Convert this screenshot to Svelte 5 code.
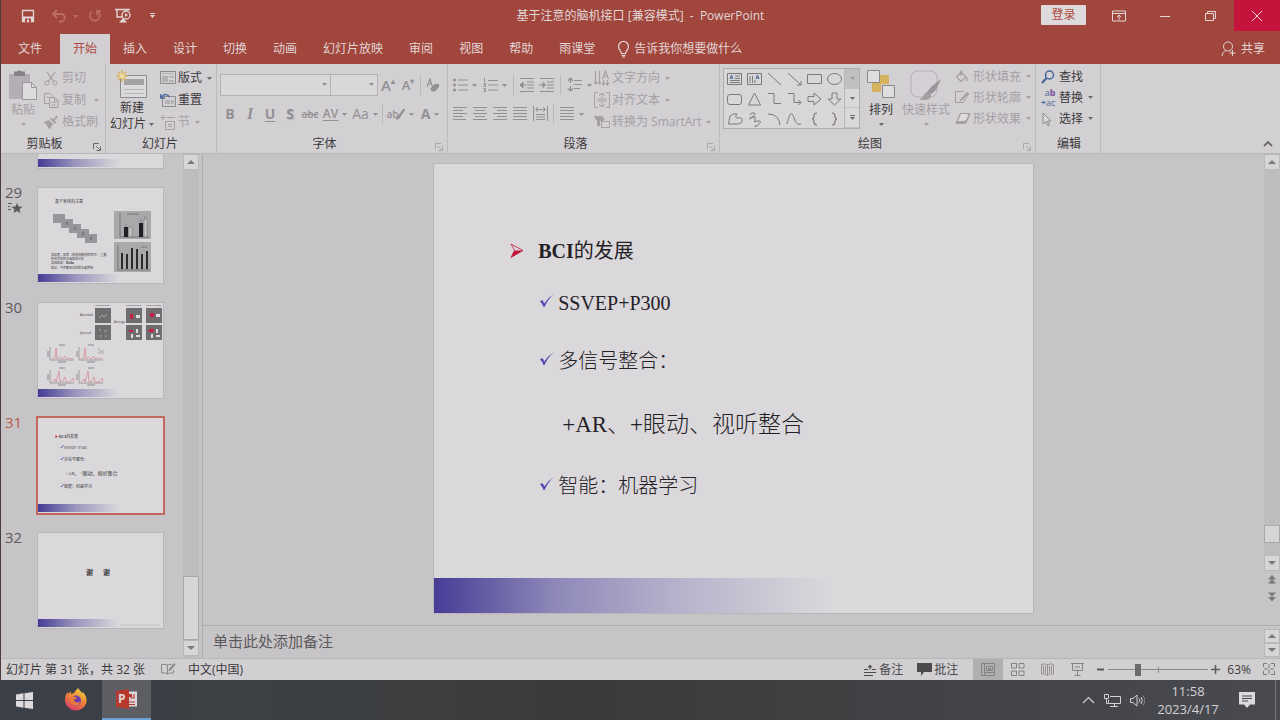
<script>
  const dark = '#5d5a5d';

  // Each glyph: [width, height, markup]
  const icons = {
    save: [14, 14, '<path d="M1.500 1.500h11v11h-11z" fill="none" stroke="currentColor" stroke-width="1.300"/><path d="M1 7.500h12V13H1z" fill="currentColor"/><path d="M4 9.500h6V13H4z" fill="#a0463c"/><path d="M6 10.500h2V13H6z" fill="currentColor"/>'],
    undo: [16, 14, '<path d="M2 5h8a3.600 3.600 0 0 1 0 7.500H8M6 1 2 5l4 4" fill="none" stroke="currentColor" stroke-width="1.800"/>'],
    redo: [14, 14, '<path d="M9.500 2.500A5 5 0 1 1 4 2.600M9 6V2h4" fill="none" stroke="currentColor" stroke-width="1.700"/>'],
    show: [18, 16, '<path d="M0 1.500h15M2 2v7h5" fill="none" stroke="currentColor" stroke-width="1.400"/><circle cx="11" cy="7" r="4" fill="none" stroke="currentColor" stroke-width="1.300"/><path d="M10 5v4l3-2zM8 10l4 4.500H4z" fill="currentColor"/>'],
    customize: [7, 6, '<path d="M1 .500h5" stroke="currentColor"/><path d="M1 2h5L3.500 5z" fill="currentColor"/>'],
    caret: [5, 3, '<path d="M0 0h5L2.500 3z" fill="currentColor"/>'],
    ribbonOpts: [14, 12, '<path d="M.500 1h13v10H.500zM.500 3.500h13M7 10V5M4.800 7 7 5l2.200 2" fill="none" stroke="currentColor"/>'],
    min: [10, 10, '<path d="M0 5.500h10" stroke="currentColor"/>'],
    restore: [12, 12, '<path d="M.500 3.500h8v7h-8zM2.500 3V1.500h8v7H9" fill="none" stroke="currentColor"/>'],
    close: [12, 12, '<path d="m1 1 10 10M11 1 1 11" stroke="currentColor"/>'],
    bulb: [13, 17, '<path d="M4.500 12.500c0-2.500-3-3.500-3-7a5 5 0 0 1 10 0c0 3.500-3 4.500-3 7zM4.500 14.500h4M5 16h3" fill="none" stroke="currentColor" stroke-width="1.200"/>'],
    person: [16, 16, '<circle cx="7" cy="5.500" r="4.500" fill="none" stroke="currentColor"/><path d="M1 15c.500-3 2-5 4-5.500M9 9.500l1 1M11.500 9v6M8.500 12h6" fill="none" stroke="currentColor"/>'],
    paste: [28, 30, '<path d="M0 4h21v25H0z" fill="#b3aeb3"/><path d="M5 1.500h3q2-2 5 0h3V6H5z" fill="#858285"/><path d="M13.500 12.500h9l5 5v12h-14z" fill="#dedbde" stroke="#9b989b"/><path d="M22.500 12.500v5h5" fill="none" stroke="#9b989b"/>'],
    cut: [15, 15, '<path d="m3 1 7 10M11 1 4 11" stroke="currentColor" stroke-width="1.300"/><circle cx="3" cy="12" r="2.200" fill="none" stroke="currentColor"/><circle cx="11" cy="12" r="2.200" fill="none" stroke="currentColor"/>'],
    copy: [15, 15, '<path d="M5 10.500H.500v-10H6l2 2V4M5.500 4.500H11l3 3v7H5.500zM10.500 5v3h3M3 4h2M7.500 9.500h4M7.500 12h4" fill="none" stroke="currentColor"/>'],
    brush: [15, 14, '<path d="m0 7 5-2 4 4-3 5c-1 0-2-1-2-2zM6 4l5 5 1.500-1.500-2-2L14 2l-1.500-1.500L9 4.500l-1.500-2z" fill="currentColor"/>'],
    newSlide: [32, 28, '<path d="M4.500 5.500h26v22h-26z" fill="#dcdadd" stroke="#8f8c8f"/><path d="M8 9h20v6H8z" fill="#a5a2a6"/><path d="M8 19.500h20M8 23.500h20" stroke="#b9b6ba"/><path d="M6 0v12M0 6h12M2 2l8 8M10 2l-8 8" stroke="#d8b35a" stroke-width="1.500"/><circle cx="6" cy="6" r="2.500" fill="#eadba0"/>'],
    layout: [16, 14, '<path d="M.500.500h15v12H.500z" fill="none" stroke="#8f8c8f"/><path d="M2 2.500h12" stroke="#b5b2b6"/><path d="M2 5h6v6H2zM9 5h5v2H9zM9 9h5v2H9z" fill="#b5b2b6"/>'],
    reset: [16, 15, '<path d="M2.500 3.500h13v10h-13z" fill="none" stroke="#8f8c8f"/><path d="M5 7h5v4H5zM11 7h3v4h-3z" fill="#b5b2b6"/><path d="M1 4.500C3 1 7 0 9.500 4M.500 1v4H5" fill="none" stroke="#4a6f9f" stroke-width="1.500"/>'],
    section: [16, 15, '<path d="M3 0v5M.500 2.500h5M7 2.500h8M5.500 6.500h9v8h-9zM8 9.500h4M8 11.500h4" fill="none" stroke="currentColor"/>'],
    launcher: [8, 8, '<path d="M.500 6V.500H6M3 3l4 4M7.500 3.500v4h-4" fill="none" stroke="currentColor"/>'],
    eraser: [14, 14, '<path d="m1 9 3-8 2.500 8M2 6h4" fill="none" stroke="currentColor" stroke-width="1.200"/><path d="m4 11 5-5h4v3l-4 4.500H6z" fill="currentColor"/>'],
    slash: [9, 14, '<path d="m8 1-7 9-1 3 3-1 6-9z" fill="currentColor"/>'],
    bullets: [15, 14, '<path d="M5 2h10M5 7h10M5 12h10" stroke="currentColor"/><circle cx="1.500" cy="2" r="1.500" fill="currentColor"/><circle cx="1.500" cy="7" r="1.500" fill="currentColor"/><circle cx="1.500" cy="12" r="1.500" fill="currentColor"/>'],
    numbers: [15, 14, '<path d="M5 2.500h10M5 7h10M5 12h10M1.500 0v4M.500 5.500h2v1.500H1v1.500h2M.500 10.500h2v3h-2M1 12h1.500" fill="none" stroke="currentColor"/>'],
    dedent: [16, 14, '<path d="M1 .500h14M8 4h7M8 7h7M8 10h7M1 13.500h14M7 7H1.500M4 4 1 7l3 3" fill="none" stroke="currentColor"/><path d="M4.500 3.500 1 7l3.500 3.500z" fill="currentColor"/>'],
    indent: [16, 14, '<path d="M1 .500h14M8 4h7M8 7h7M8 10h7M1 13.500h14M0 7h5" fill="none" stroke="currentColor"/><path d="M3.500 3.500 7 7l-3.500 3.500z" fill="currentColor"/>'],
    spacing: [16, 16, '<path d="M3.500 1v5M3.500 9v5M7 3.500h8M7 7.500h8M7 11.500h6M1 4l2.500-3L6 4M1 11.500 3.500 14 6 11.500" fill="none" stroke="currentColor" stroke-width="1.200"/>'],
    left: [15, 16, '<path d="M0 1.500h14M0 4.500h10M0 7.500h14M0 10.500h10M0 13.500h13" stroke="currentColor"/>'],
    center: [15, 16, '<path d="M0 1.500h14M2 4.500h10M0 7.500h14M2 10.500h10M0 13.500h14" stroke="currentColor"/>'],
    right: [15, 16, '<path d="M0 1.500h14M4 4.500h10M0 7.500h14M4 10.500h10M0 13.500h14" stroke="currentColor"/>'],
    justify: [15, 16, '<path d="M0 1.500h14M0 4.500h14M0 7.500h14M0 10.500h14M0 13.500h14" stroke="currentColor"/>'],
    distribute: [15, 16, '<path d="M.500 0v15M14.500 0v15M2.500 3.500h10M5 1 2.500 3.500 5 6M10 1l2.500 2.500L10 6M3 8.500h9M3 11h9M3 13.500h9" fill="none" stroke="currentColor"/>'],
    textDir: [17, 17, '<path d="M1.500 1v12M5.500 1v12M9.500 10v4M13.500 10v4M0 12l1.500 2L3 12M4 12l1.500 2L7 12M8 13l1.500 2 1.500-2M12 13l1.500 2 1.500-2M8.500 9l3-8 3 8M9.500 6h4" fill="none" stroke="currentColor" stroke-width="1.200"/>'],
    alignText: [17, 16, '<path d="M4 .500H.500v15H4M12 .500h3.500v15H12M8 1v5M8 10v5M5 3.500 8 1l3 2.500M5 12.500 8 15l3-2.500M3.500 7h9M3.500 9h9" fill="none" stroke="currentColor"/>'],
    smart: [17, 14, '<path d="M0 1h8l3 3-2 2H6v5H3V5H2z" fill="currentColor"/><path d="M7.500 6.500h8v6h-8z" fill="#d6d3d6" stroke="currentColor"/>'],
    arrange: [28, 28, '<path d="M12 5h10v9H12zM5 13h9v9H5z" fill="#d5b25e"/><path d="M.500.500h12v12H.500zM15.500 15.500h12v12h-12z" fill="#dfdde0" stroke="#8b888b"/>'],
    quick: [32, 32, '<rect x="1" y="1" width="26" height="26" rx="7" fill="#d6cfd6" stroke="#b4aeb4"/><path d="m31 9-5 11-6 5-3-3 5-6z" fill="#999599"/><path d="M18 22c-3 0-4 2-5 5-1 1-2 2-4 3h6c5 0 6-3 6-5z" fill="#a39fa3"/>'],
    fill: [14, 14, '<path d="m6 2 5 5-5 4.500L1.500 7zM6 6V1h2M12 7v4" fill="none" stroke="currentColor" stroke-width="1.200"/>'],
    outline: [15, 13, '<path d="M9 .500H.500v11h8L14 2" fill="none" stroke="currentColor"/><path d="m12 1 2 1.500-7 7-2.500 1L5.500 8z" fill="currentColor"/>'],
    effect: [16, 14, '<path d="M5 1h9q2 0 1 2l-3 7q-1 2-3 2H2q-2 0-1-2z" fill="currentColor"/><path d="M6 2h6q2 0 1 2l-2 4q-1 1-2 1H3z" fill="#dcdadd"/>'],
    find: [14, 14, '<circle cx="8.500" cy="5" r="4" fill="none" stroke="#48699a" stroke-width="1.500"/><path d="M5.500 8 1 13" stroke="#48699a" stroke-width="2.200"/>'],
    arrow: [5, 5, '<path d="M0 2.500h4M2 .500l2 2-2 2" fill="none" stroke="currentColor"/>'],
    select: [12, 14, '<path d="m2 1 8 8H6.500l2 4-1.500.700L5 9.500 2 12z" fill="#dcdadd" stroke="#8b888b"/>'],
    chevUp: [10, 6, '<path d="m1 5 4-4 4 4" fill="none" stroke="currentColor" stroke-width="1.800"/>'],
    star: [16, 12, '<path d="m10 1 1.500 3.500 4 .200-3 2.500 1 4L10 9l-3.500 2 1-3.800-3-2.500 4-.200z" fill="currentColor"/><path d="M1 1.500h4M1 4.500h2M1 7.500h3" stroke="currentColor"/>'],
    spell: [15, 13, '<path d="M6.500 2v9Q4 9 .500 10V1.500q4-.500 6 .500 2-1 4-.500M6.500 11q2-1.500 6-1V7" fill="none" stroke="currentColor"/><path d="m13 0 1.500 1.500-5 6-2 .500.500-2z" fill="currentColor"/>'],
    notes: [13, 12, '<path d="M0 5.500h4M8 5.500h4M0 8.500h12M0 11.500h9M6 2v4" stroke="currentColor"/><path d="M3.500 3.500 6 .500l2.500 3z" fill="currentColor"/>'],
    comment: [15, 13, '<path d="M0 0h15v9H7l-3 4V9H0z" fill="currentColor"/>'],
    normal: [14, 13, '<path d="M.500.500h13v12H.500zM3.500 1v11M5.500 3.500h6v4h-6zM4 9.500h9" fill="none" stroke="currentColor"/><path d="M7 5h3v2H7z" fill="currentColor"/>'],
    sorter: [14, 13, '<path d="M.500.500h5v4.500h-5zM8 .500h5v4.500H8zM.500 8h5v4.500h-5zM8 8h5v4.500H8z" fill="none" stroke="currentColor"/>'],
    reading: [14, 13, '<path d="M6.500 1.500v11M.500 1.500Q4 0 6.500 2 9 0 12.500 1.500v9.500Q9 10.500 6.500 12 4 10.500.500 11zM2.500 3v7M4.500 3v7M8.500 3v7M10.500 3v7" fill="none" stroke="currentColor" stroke-width=".8"/>'],
    present: [14, 13, '<path d="M0 .500h13M1.500 1v6.500h10V1M6.500 8v4M3.500 12.500h6M4 4h5" fill="none" stroke="currentColor"/>'],
    fit: [13, 13, '<path d="M.500 4V.500H4M8 .500h3.500V4M11.500 8v3.500H8M4 11.500H.500V8" fill="none" stroke="currentColor"/><path d="M6 1v4M6 7v4M1 6h4M7 6h4" stroke="currentColor"/>'],
    dblUp: [8, 10, '<path d="M4 0 8 4.500H0zM4 4l4 4.500H0z" fill="currentColor"/>'],
    dblDown: [8, 10, '<path d="M4 9.500 0 5h8zM4 5 0 .500h8z" fill="currentColor"/>'],
    up: [8, 4, '<path d="m4 0 4 4H0z" fill="currentColor"/>'],
    down: [8, 4, '<path d="M0 0h8L4 4z" fill="currentColor"/>'],
    win: [17, 17, '<path d="M0 2.500 7.500 1.300V8H0zM8.500 1.200 17 0v8H8.500zM0 9h7.500v6.700L0 14.500zM8.500 9H17v8l-8.500-1.200z" fill="#dcdadd"/>'],
    firefox: [24, 24, '<defs><linearGradient id="ff" x1=".8" y1="0" x2=".3" y2="1"><stop offset="0" stop-color="#f0d545"/><stop offset=".45" stop-color="#ee8a36"/><stop offset="1" stop-color="#d93a67"/></linearGradient></defs><path d="M14 0c1 2 3 3 4 5l1-1c3 3 4 7 3.500 10.500A11 11 0 0 1 1 13C.800 9 2 6 3.500 4L4 6l3-2.500V6l3-1c1-2 2.500-3 4-5z" fill="url(#ff)"/><circle cx="12" cy="12.500" r="5" fill="#6b3fb0"/><path d="M6 9c2-1 4-1 5 0l2 .500c-.500 1.500-2 1.500-3 2 0 3 4 4 6.500 2-1 4-6 5-9 2-2-2-2.500-4.500-1.500-6.500z" fill="#ed7b38"/>'],
    ppt: [22, 20, '<path d="M12 2.500h9v15h-9z" fill="#dcd4d6"/><path d="M13 13h6M13 15.500h6M18 5v4h-4" fill="none" stroke="#b03a30" stroke-width="1.200"/><path d="M13 5h3v3h-3z" fill="#b03a30"/><path d="m0 2 13-2v20L0 18z" fill="#b5392d"/>'],
    tray: [13, 8, '<path d="m1 7 5.500-5.500L12 7" fill="none" stroke="currentColor" stroke-width="1.200"/>'],
    net: [17, 13, '<path d="M6 2.500h10.500v7H4.500V6M10.500 10v2M6 12.500h8M.500.500h4v4h-4zM2.500 5v4.500H4" fill="none" stroke="currentColor"/>'],
    vol: [15, 13, '<path d="M.500 4.500h2.500L7 1v11L3 8.500H.500zM9 4.500q1.500 2 0 4M11 3q2.500 3.500 0 7" fill="none" stroke="currentColor"/><path d="M13 1.500q3.500 5 0 10" fill="none" stroke="#85858a"/>'],
    msg: [16, 16, '<path d="M0 0h16v12.500h-5L8 16l-3-3.500H0z" fill="#dcdadd"/><path d="M3 4h10M3 6.500h10M3 9h6" stroke="#45464b"/>']
  };

  const shapes = [
    '<path d="M1.500 2.500h14v11h-14zM9 5h5M9 7.500h5M4 9.500h10M4 11.500h10"/><path d="m4 8 1.500-4L7 8M4.500 7h2" stroke="#48699a"/>',
    '<path d="M1.500 2.500h14v11h-14zM4 5v7M6.500 5v7M9 9v3"/><path d="m10 8 1.500-4L13 8M10.500 7h2" stroke="#48699a"/>',
    '<path d="m2 2 13 12"/>', '<path d="m2 2 13 12M15 10v4h-4"/>',
    '<path d="M1.500 3.500h14v9h-14z"/>', '<ellipse cx="8.500" cy="8" rx="7" ry="5.500"/>',
    '<rect x="1.500" y="3.500" width="14" height="10" rx="2.500"/>', '<path d="M8.500 2 14.500 14h-12z"/>',
    '<path d="M2 2.500h6v10h7"/>', '<path d="M2 2.500h6v9h7M12.500 9l2.500 2.500-2.500 2.500"/>',
    '<path d="M2 5.500h6V2l7 6-7 6v-3.500H2z"/>', '<path d="M6 2h5v6h4l-6.500 6L2 8h4z"/>',
    '<path d="M4 5q3-3 7-2-3 4 1 4 5-1 4 3-1 3-4 3H2.500z"/>', '<path d="M4 4q1-3 4-2t-2 4-1 1 4-1 0 3-1 2 4-1 0 4-2 0"/>',
    '<path d="M2 3q11 0 12 11"/>', '<path d="M1 13C4 0 6 1 8 7s4 7 7 6"/>',
    '<path d="M11 2Q8 2 8 5t-2 3q2 0 2 3t3 3" stroke-width="1.200"/>', '<path d="M6 2q3 0 3 3t2 3q-2 0-2 3t-3 3" stroke-width="1.200"/>'
  ];

  const tabs = ['文件', '开始', '插入', '设计', '切换', '动画', '幻灯片放映', '审阅', '视图', '帮助', '雨课堂'];
  const thumbs = [28, 29, 30, 31, 32];
  let current = $state(31);
  let zoom = $state(28);
</script>

{#snippet ico(name)}
  <svg class="ico" width={icons[name][0]} height={icons[name][1]} viewBox="0 0 {icons[name][0]} {icons[name][1]}" aria-hidden="true">{@html icons[name][2]}</svg>
{/snippet}

{#snippet btn(name, label, caret = false)}
  <button class="tool" class:wide={caret} aria-label={label}>{@render ico(name)}{#if caret}{@render ico('caret')}{/if}</button>
{/snippet}

{#snippet line(name, text, caret = true, on = false)}
  <button class="line" class:on>
    <span class="slot">{@render ico(name)}</span><span>{text}</span>{#if caret}<span class="drop">{@render ico('caret')}</span>{/if}
  </button>
{/snippet}

{#snippet caption(text, launch = true, on = false)}
  <div class="caption">
    <span>{text}</span>
    {#if launch}<button class="launch" class:on aria-label="{text}设置">{@render ico('launcher')}</button>{/if}
  </div>
{/snippet}

{#snippet bars(x, y, heights)}
  {#each heights as h, i}
    <rect x={x + i * 5} y={y - h} width="2" height={h} fill="#2b2a2d" />
  {/each}
{/snippet}

<div class="screen">
  <div class="app">
    <header class="titlebar">
      <div class="quickbar">
        <button aria-label="保存">{@render ico('save')}</button>
        <button class="dim undo" aria-label="撤消">{@render ico('undo')}{@render ico('caret')}</button>
        <button class="dim redo" aria-label="恢复">{@render ico('redo')}</button>
        <button aria-label="从头开始">{@render ico('show')}</button>
        <button aria-label="自定义">{@render ico('customize')}</button>
      </div>
      <h1>基于注意的脑机接口 [兼容模式]&nbsp; - &nbsp;PowerPoint</h1>
      <div class="winbtns">
        <button class="login">登录</button>
        <button aria-label="功能区显示选项">{@render ico('ribbonOpts')}</button>
        <button aria-label="最小化">{@render ico('min')}</button>
        <button aria-label="还原">{@render ico('restore')}</button>
        <button class="close" aria-label="关闭">{@render ico('close')}</button>
      </div>
    </header>

    <nav class="tabs">
      {#each tabs as tab}
        <button class="tab" class:file={tab === '文件'} class:active={tab === '开始'}>{tab}</button>
      {/each}
      <button class="tell">{@render ico('bulb')}<span>告诉我你想要做什么</span></button>
      <button class="share">{@render ico('person')}<span>共享</span></button>
    </nav>

    <section class="ribbon">
      <div class="group clip">
        <div class="body">
          <button class="big">{@render ico('paste')}<span>粘贴</span>{@render ico('caret')}</button>
          <div class="stack">
            {@render line('cut', '剪切', false)}
            {@render line('copy', '复制')}
            {@render line('brush', '格式刷', false)}
          </div>
        </div>
        {@render caption('剪贴板', true, true)}
      </div>

      <div class="group slides">
        <div class="body">
          <button class="big on new">{@render ico('newSlide')}<span>新建</span><span class="two">幻灯片{@render ico('caret')}</span></button>
          <div class="stack">
            {@render line('layout', '版式', true, true)}
            {@render line('reset', '重置', false, true)}
            {@render line('section', '节')}
          </div>
        </div>
        {@render caption('幻灯片', false)}
      </div>

      <div class="group font">
        <div class="body rows">
          <div class="row">
            <div class="combo name"><select aria-label="字体"><option></option></select>{@render ico('caret')}</div>
            <div class="combo size"><select aria-label="字号"><option></option></select>{@render ico('caret')}</div>
            <button class="tool grow" aria-label="增大字号">A<sup>▴</sup></button>
            <button class="tool grow small" aria-label="减小字号">A<sup>▾</sup></button>
            <i class="sep"></i>
            {@render btn('eraser', '清除格式')}
          </div>
          <div class="row">
            <button class="tool"><b>B</b></button>
            <button class="tool"><em>I</em></button>
            <button class="tool"><b><u>U</u></b></button>
            <button class="tool"><b class="shadow">S</b></button>
            <button class="tool abc"><s>abc</s></button>
            <button class="tool wide av"><u>AV</u>{@render ico('caret')}</button>
            <button class="tool wide aa">Aa{@render ico('caret')}</button>
            <i class="sep"></i>
            <button class="tool wide hl"><span class="pen">ab{@render ico('slash')}</span>{@render ico('caret')}</button>
            <button class="tool wide"><b>A</b>{@render ico('caret')}</button>
          </div>
        </div>
        {@render caption('字体')}
      </div>

      <div class="group para">
        <div class="body">
          <div class="rows">
            <div class="row">
              {@render btn('bullets', '项目符号', true)}
              {@render btn('numbers', '编号', true)}
              <i class="sep"></i>
              {@render btn('dedent', '减少缩进')}
              {@render btn('indent', '增加缩进')}
              <i class="sep"></i>
              {@render btn('spacing', '行距', true)}
            </div>
            <div class="row">
              {@render btn('left', '左对齐')}
              {@render btn('center', '居中')}
              {@render btn('right', '右对齐')}
              {@render btn('justify', '两端对齐')}
              {@render btn('distribute', '分散对齐')}
              <i class="sep"></i>
              {@render btn('justify', '分栏', true)}
            </div>
          </div>
          <div class="stack">
            {@render line('textDir', '文字方向')}
            {@render line('alignText', '对齐文本')}
            {@render line('smart', '转换为 SmartArt')}
          </div>
        </div>
        {@render caption('段落')}
      </div>

      <div class="group draw">
        <div class="body">
          <div class="gallery">
            <div class="cells">
              {#each shapes as s, i}
                <button aria-label="形状 {i + 1}"><svg width="17" height="16" viewBox="0 0 17 16" fill="none" stroke="#7d7a7d">{@html s}</svg></button>
              {/each}
            </div>
            <div class="gscroll">
              <button class="off" aria-label="上移">{@render ico('caret')}</button>
              <button aria-label="下移">{@render ico('caret')}</button>
              <button aria-label="更多">{@render ico('customize')}</button>
            </div>
          </div>
          <button class="big on arr">{@render ico('arrange')}<span>排列</span>{@render ico('caret')}</button>
          <button class="big quick">{@render ico('quick')}<span>快速样式</span>{@render ico('caret')}</button>
          <div class="stack tight">
            {@render line('fill', '形状填充')}
            {@render line('outline', '形状轮廓')}
            {@render line('effect', '形状效果')}
          </div>
        </div>
        {@render caption('绘图')}
      </div>

      <div class="group edit">
        <div class="body">
          <div class="stack tight">
            {@render line('find', '查找', false, true)}
            <button class="line on">
              <span class="slot swap"><span>a<b>b</b></span><span class="to">{@render ico('arrow')}ac</span></span><span>替换</span><span class="drop">{@render ico('caret')}</span>
            </button>
            {@render line('select', '选择', true, true)}
          </div>
        </div>
        {@render caption('编辑', false)}
      </div>
      <button class="collapse" aria-label="折叠功能区">{@render ico('chevUp')}</button>
    </section>

    <main>
      <aside>
        <ol class="thumbs">
          {#each thumbs as n}
            <li class:sel={n === current}>
              <div class="num">{#if n > thumbs[0]}<span>{n}</span>{/if}{#if n === 29}{@render ico('star')}{/if}</div>
              <button class="thumb" aria-label="幻灯片 {n}" onclick={() => (current = n)}>
                <svg viewBox="0 0 125 95" width="125" height="95">
                  <rect y="86" width="125" height="8" fill="url(#band)" />
                  {#if n === 29}
                    <text x="17" y="15" font-size="4">基于客体的注意</text>
                    {#each [0, 1, 2, 3, 4] as k}
                      <rect x={15 + k * 8} y={26 + k * 5} width="12" height="9" fill="#98969a" />
                      {#if k}<text x={20 + k * 8} y={32 + k * 5} font-size="4">E</text>{/if}
                    {/each}
                    <rect x="76" y="23" width="37" height="28" fill="#aaa8ab" />
                    <path d="M82 25v24h29M89 26h12" stroke="#555" fill="none" stroke-width=".6" />
                    <path d="M86 39h4v10h-4zM101 35h4v14h-4z" fill="#1f1e22" />
                    <path d="M91 39h3v10h-3zM106 31h3v18h-3zM88 36v3M103 31v4M107 28v3" fill="#c9c7ca" stroke="#666" stroke-width=".5" />
                    <rect x="76" y="54" width="37" height="30" fill="#aaa8ab" />
                    <path d="M80 57v25h32M103 59h6" stroke="#555" fill="none" stroke-width=".6" />
                    {@render bars(83, 81, [16, 15, 21, 20, 15, 18])}
                    <text x="13" y="68" font-size="3">实验者：探索（视觉和触觉的空间）：重复</text>
                    <text x="13" y="72" font-size="3">听觉对应的注意结果分析</text>
                    <text x="13" y="76" font-size="3">实验结果：<tspan font-weight="bold">N=6a</tspan></text>
                    <text x="13" y="81" font-size="3">结论：不同客体对应的注意影响</text>
                  {:else if n === 30}
                    <path d="M57 5h16v15H57zM57 22h16v15H57zM88 5h16v15H88zM88 22h16v15H88zM108 5h16v15h-16zM108 22h16v15h-16z" fill="#6f6d70" />
                    <path d="m61 15 3-3 2 2 3-3M61 27h2M66 28h3M62 33h2M67 33h2" stroke="#aaa" fill="none" />
                    <path d="M92 11h3v5h-3zM111 12l3-3 3 3-3 3zM91 27h4v2h-4zM111 26h5v3h-5z" fill="#c62042" />
                    <path d="M98 12h4v3h-4zM118 11h4v3h-4zM98 26h2v4h-2zM93 31h2v4h-2zM98 32h4v2h-4zM118 26h2v4h-2zM113 31h2v4h-2zM118 32h4v2h-4z" fill="#dddbde" />
                    <text x="57" y="3" font-size="2">Design scheme1</text>
                    <text x="88" y="3" font-size="2">Design scheme2</text>
                    <text x="108" y="3" font-size="2">Design scheme3</text>
                    <text x="42" y="13" font-size="3">Attended</text><text x="42" y="31" font-size="3">Ignored</text><text x="76" y="20" font-size="3">Average</text>
                    {#each [[12, 44], [41, 44], [12, 67], [41, 67]] as [x, y], k}
                      <g transform="translate({x} {y})">
                        <path d="M0 0v13h24" fill="none" stroke="#77757a" stroke-width=".6" />
                        <path d={k < 2 ? 'M2 12 5 11 6 1 7 12l3-2 2 2 3-3 1 3 3-1 4 1' : 'M2 12l3-3 1 3 3-11 1 11 3-1 2-4 1 5 4 0 3-4 1 4'} fill="none" stroke="#d4656c" stroke-width=".5" />
                        <path d="M-2 4v6M8 15h8M9-2h6" stroke="#77757a" stroke-width=".8" />
                      </g>
                    {/each}
                    <path d="M59 46h3M61 48h5M60 50h6" stroke="#99979b" stroke-width=".7" />
                  {:else if n === 31}
                    <path d="m17 17 3 1.500-3 1.500.700-1.500z" fill="#c4143c" />
                    <text x="21" y="20" font-size="4" class="serif"><tspan font-weight="bold">BCI</tspan>的发展</text>
                    <text x="26" y="31" font-size="4" class="serif">SSVEP+P300</text>
                    <text x="26" y="43" font-size="4" class="serif">多信号整合：</text>
                    <text x="27" y="57" font-size="5" class="serif">+AR、+眼动、视听整合</text>
                    <text x="26" y="70" font-size="4" class="serif">智能：机器学习</text>
                    <path d="m22.500 29 1 1 2-3M22.500 41l1 1 2-3M22.500 68l1 1 2-3" fill="none" stroke="#5548b0" stroke-width=".8" />
                  {:else if n === 32}
                    <text x="48" y="42" font-size="7" font-weight="bold">谢</text><text x="65" y="42" font-size="7" font-weight="bold">谢</text>
                    <path d="M83 92h39" stroke="#bdbabe" stroke-width=".8" stroke-dasharray="3 1" />
                  {/if}
                </svg>
              </button>
            </li>
          {/each}
        </ol>
        <div class="vbar">
          <button aria-label="向上">{@render ico('up')}</button>
          <div class="track"></div>
          <div class="grip long"></div>
          <button aria-label="向下">{@render ico('down')}</button>
        </div>
      </aside>

      <section class="work">
        <div class="canvas">
          <div class="stage">
            <article class="slide">
              <ul>
                <li class="head"><svg width="28" height="16" viewBox="0 0 28 16"><path d="m1 1 12 6.500L1 14.500l3.500-7z" fill="none" stroke="#c4143c" stroke-width=".8" /><path d="M4.500 7.500H13l-12 7z" fill="#c4143c" /></svg><span><b>BCI</b>的发展</span></li>
                {#each ['SSVEP+P300', '多信号整合：', '+AR、+眼动、视听整合', '智能：机器学习'] as t, i}
                  <li class="i{i}">{#if i !== 2}<svg class="tick" width="18" height="16" viewBox="0 0 18 16"><path d="m0 8.500 2-1.500q1.500.500 2.200 3.500Q8 4.500 14 1 8 6 4.500 14H3.500Q2 10 0 8.500z" fill="#5548b0" /></svg>{/if}<span>{t}</span></li>
                {/each}
              </ul>
              <div class="band"></div>
            </article>
          </div>
          <div class="vbar right">
            <button aria-label="上滚">{@render ico('up')}</button>
            <div class="track"></div>
            <div class="grip"></div>
            <div class="track last"></div>
            <button aria-label="下滚">{@render ico('down')}</button>
            <button class="flat" aria-label="上一张">{@render ico('dblUp')}</button>
            <button class="flat" aria-label="下一张">{@render ico('dblDown')}</button>
          </div>
        </div>
        <div class="notes">
          <p>单击此处添加备注</p>
          <div class="mini">
            <button aria-label="备注上滚">{@render ico('up')}</button>
            <button aria-label="备注下滚">{@render ico('down')}</button>
          </div>
        </div>
      </section>
    </main>

    <footer class="status">
      <span>幻灯片 第 31 张，共 32 张</span>
      <button class="spell" aria-label="拼写检查">{@render ico('spell')}</button>
      <span>中文(中国)</span>
      <div class="right-side">
        <button class="txt">{@render ico('notes')}备注</button>
        <button class="txt com">{@render ico('comment')}批注</button>
        <button class="view cur" aria-label="普通视图">{@render ico('normal')}</button>
        <button class="view" aria-label="幻灯片浏览">{@render ico('sorter')}</button>
        <button class="view" aria-label="阅读视图">{@render ico('reading')}</button>
        <button class="view" aria-label="幻灯片放映">{@render ico('present')}</button>
        <button class="pm" aria-label="缩小"><svg width="9" height="9"><path d="M1 4.500h7" stroke={dark} stroke-width="2" /></svg></button>
        <input type="range" min="0" max="100" bind:value={zoom} aria-label="显示比例" />
        <button class="pm" aria-label="放大"><svg width="9" height="9"><path d="M0 4.500h9M4.500 0v9" stroke={dark} stroke-width="1.500" /></svg></button>
        <span class="pct">63%</span>
        <button class="fit" aria-label="适应窗口">{@render ico('fit')}</button>
      </div>
    </footer>
  </div>

  <div class="taskbar">
    <button aria-label="开始菜单">{@render ico('win')}</button>
    <button class="fx" aria-label="Firefox">{@render ico('firefox')}</button>
    <button class="running" aria-label="PowerPoint">{@render ico('ppt')}<span class="p">P</span></button>
    <div class="tray">
      <button aria-label="显示隐藏的图标">{@render ico('tray')}</button>
      <button aria-label="网络">{@render ico('net')}</button>
      <button aria-label="音量">{@render ico('vol')}</button>
      <div class="clock"><span>11:58</span><span>2023/4/17</span></div>
      <button aria-label="通知">{@render ico('msg')}</button>
      <i class="peek"></i>
    </div>
  </div>
</div>

<svg class="defs" width="0" height="0" aria-hidden="true">
  <defs>
    <linearGradient id="band"><stop offset="0" stop-color="#463c96" /><stop offset=".3" stop-color="#9a96bd" /><stop offset=".65" stop-color="#dad8db" /></linearGradient>
  </defs>
</svg>

<style>
  :global(body) { margin: 0; background: #c7c4c7; }
  .screen, .screen * { box-sizing: border-box; }
  .screen {
    height: 100vh; display: flex; flex-direction: column; overflow: hidden;
    font: 12px/18px "Open Sans", "Noto Sans CJK SC", sans-serif; color: #3b393b;
  }
  .defs { position: absolute; }
  button { font: inherit; color: inherit; background: none; border: 0; padding: 0; margin: 0; display: flex; align-items: center; justify-content: center; white-space: nowrap; }
  .ico { display: block; flex: none; }
  .app { flex: 1; min-height: 0; display: flex; flex-direction: column; border-left: 1px solid #4d3c40; }

  .titlebar { flex: none; height: 32px; display: grid; grid-template-columns: 1fr auto 1fr; background: #a0463c; color: #e3d6d7; }
  h1 { font: inherit; margin: 0; line-height: 32px; white-space: nowrap; }
  .quickbar { display: flex; align-items: center; gap: 16px; padding-left: 20px; }
  .quickbar .undo { gap: 6px; margin-right: -6px; }
  .quickbar .redo { margin-right: -3px; }
  .dim { color: #bd6d65; }
  .winbtns { display: flex; justify-content: flex-end; align-items: center; }
  .winbtns button { width: 46px; height: 31px; align-self: flex-start; }
  .winbtns .login { width: 45px; height: 20px; background: #dcdadb; color: #b04a40; border-radius: 1px; align-self: center; margin: 0 10px 2px 0; }
  .winbtns .close { background: #c4143c; }

  .tabs { flex: none; height: 32px; display: flex; padding-top: 2px; background: #a0463c; color: #e3d6d7; }
  .tab { padding: 0 13px; }
  .tab.file { padding: 0 18px 0 17px; }
  .tab.active { background: #d3d0d3; color: #ad4a3f; }
  .tell { gap: 4px; margin-left: 9px; }
  .share { margin-left: auto; gap: 4px; padding-right: 15px; }

  .ribbon { flex: none; height: 90px; display: flex; background: #d3d0d3; border-bottom: 1px solid #b9b6b9; color: #a39fa3; }
  .group { flex: none; display: flex; flex-direction: column; border-right: 1px solid #bebbbe; padding-top: 3px; }
  .body { display: flex; height: 68px; }
  .caption { position: relative; text-align: center; color: #3b393b; line-height: 18px; }
  .launch { position: absolute; right: 4px; bottom: 2px; color: #a9a6a9; }
  .launch.on { color: #6d6a6d; }
  .stack { display: flex; flex-direction: column; }
  .line { height: 22px; justify-content: flex-start; }
  .tight { margin-top: -1px; }
  .tight .line { height: 21px; }
  .slot { width: 18px; display: flex; flex: none; }
  .drop { padding-left: 5px; }
  .on { color: #3b393b; }
  .on .drop, .on > .ico:last-child, .two .ico { color: #6d6a6d; }
  .big { flex-direction: column; justify-content: flex-start; padding-top: 3px; }
  .big > span { line-height: 16px; }
  .big > .ico:first-child { margin-bottom: 2px; }
  .big > .ico:last-child { margin-top: 5px; }
  .two { display: flex; align-items: center; gap: 3px; }

  .clip { width: 105px; }
  .clip .caption, .slides .caption { padding-right: 17px; }
  .clip .big { margin: 0 7px 0 8px; }
  .slides { width: 111px; }
  .slides .caption { padding-right: 2px; }
  .big.new { margin: 0 6px 0 4px; }
  .clip .drop { padding-left: 8px; }
  .font { width: 231px; padding-left: 3px; }
  .font .caption { padding-right: 18px; }
  .rows { display: flex; flex-direction: column; gap: 7px; padding-top: 7px; }
  .row { display: flex; align-items: center; height: 22px; color: #939093; }
  .combo { position: relative; height: 22px; display: flex; }
  .combo select { appearance: none; width: 100%; height: 100%; margin: 0; border: 1px solid #b4b1b4; border-radius: 0; background: #dad7da; padding: 0; }
  .combo .ico { position: absolute; right: 4px; top: 9px; pointer-events: none; }
  .combo.name { width: 111px; }
  .combo.size { width: 48px; margin-left: -1px; }
  .tool { width: 20px; height: 22px; font-size: 14px; }
  .tool.wide { width: 30px; gap: 4px; }
  .tool.grow { font-weight: 600; font-size: 15px; }
  .tool.small { font-size: 13px; }
  .tool sup { font-size: 8px; line-height: 8px; margin-top: -8px; }
  .tool em { font-family: "Liberation Serif", serif; font-weight: bold; font-size: 16px; }
  .tool u { text-underline-offset: 2px; }
  .tool.abc, .tool.av { font-size: 10px; font-weight: 600; }
  .tool.av { font-size: 12px; }
  .pen { display: flex; align-items: center; font-size: 10px; font-weight: 600; }
  .pen .ico { margin-left: -3px; }
  .shadow { text-shadow: 1px 1px 1px #b4b1b4; }
  .sep { width: 1px; height: 20px; background: #bbb8bb; margin: 0 3px; flex: none; }
  .font .sep { margin: 0 2px; }

  .para { width: 272px; padding-left: 2px; }
  .para .rows { width: 144px; }
  .para .caption { padding-right: 18px; }

  .draw { width: 316px; padding-left: 3px; }
  .draw .caption { padding-right: 18px; }
  .draw .stack { margin-left: 5px; }
  .gallery { display: flex; height: 61px; margin-top: 1px; border: 1px solid #b0adb0; background: #d9d6d9; }
  .cells { display: grid; grid-template-columns: repeat(6, 20px); grid-auto-rows: 20px; }
  .gscroll { width: 15px; display: flex; flex-direction: column; border-left: 1px solid #b9b6b9; color: #6d6a6d; }
  .gscroll button { flex: 1; background: #dad8da; border-bottom: 1px solid #c3c0c3; }
  .gscroll .off { background: #c2bfc2; color: #a09da0; }
  .arr { margin-left: 7px; }
  .quick { margin-left: 7px; }
  .arr > .ico:first-child { margin-bottom: 4px; }
  .quick > .ico:first-child { margin-bottom: 0; }
  .edit { width: 65px; padding-left: 5px; }
  .edit .caption { padding-right: 3px; }
  .swap { flex-direction: column; font-size: 9px; line-height: 10px; color: #48699a; }
  .swap b { color: #7d4c9b; }
  .to { display: flex; align-items: center; }
  .collapse { margin: auto 7px 6px auto; color: #6d6a6d; }

  main { flex: 1; min-height: 0; display: flex; background: #c7c4c7; }
  aside { flex: none; width: 202px; display: flex; justify-content: space-between; padding-right: 3px; border-right: 1px solid #aeabae; }
  .thumbs { list-style: none; margin: 0; padding: 0 0 28px 4px; display: flex; flex-direction: column; justify-content: flex-end; gap: 16px; overflow: hidden; }
  .thumbs li { display: flex; flex: none; height: 99px; }
  .num { width: 31px; display: flex; flex-direction: column; gap: 4px; font-size: 15px; line-height: 12px; color: #5d5a5d; }
  .num .ico { margin-left: 2px; }
  .thumb { border: 2px solid transparent; height: 99px; }
  .thumb svg { display: block; background: #dad8db; box-shadow: 0 0 0 1px #b9b6b9; }
  .thumb text { fill: #3b393b; font-family: "Open Sans", "Noto Sans CJK SC", sans-serif; }
  .thumb text.serif { font-family: "Liberation Serif", "Noto Sans CJK SC", serif; }
  .sel .num { color: #b8584c; }
  .sel .thumb { border-color: #c2685e; }
  .sel .thumb svg { box-shadow: none; }

  .vbar { width: 16px; flex: none; display: flex; flex-direction: column; background: #bfbcbf; padding-bottom: 2px; }
  .vbar button, .mini button { height: 16px; flex: none; background: #d8d5d8; border: 1px solid #bab7ba; color: #7d7a7d; }
  .track { flex: 1; }
  .grip { flex: none; height: 18px; background: #d8d5d8; border: 1px solid #a9a6a9; }
  .grip.long { height: 64px; }
  .vbar.right { padding-bottom: 20px; background: #c7c4c7; }
  .right .track { background: #bfbcbf; }
  .right .track.last { flex: none; height: 12px; }
  .vbar .flat { background: none; border: 0; height: 17px; }

  .work { flex: 1; min-width: 0; display: flex; flex-direction: column; }
  .canvas { flex: 1; min-height: 0; display: flex; border-bottom: 1px solid #aeabae; }
  .stage { flex: 1; min-width: 0; display: flex; justify-content: center; padding: 10px 0 12px; }
  .slide { height: 100%; aspect-ratio: 4 / 3; background: #dad8db; box-shadow: 0 0 0 1px #b9b6b9; display: flex; flex-direction: column; }
  .slide ul { list-style: none; margin: 0; padding: 72px 0 0 106px; font: 300 20px/30px "Liberation Serif", "Noto Sans CJK SC", serif; color: #242126; }
  .slide li { display: flex; align-items: center; white-space: nowrap; }
  .slide .head { margin-left: -30px; font-weight: 400; }
  .tick { margin-bottom: 4px; }
  .i0 { margin-top: 22px; }
  .i1 { margin-top: 28px; }
  .i2 { margin-top: 34px; padding-left: 22px; font-size: 23px; }
  .i3 { margin-top: 31px; }
  .band { margin-top: auto; height: 35px; background: linear-gradient(90deg, #463c96, #8d88b8 20%, #b5b1cb 40%, #dad8db 66%); }
  .notes { flex: none; height: 32px; display: flex; justify-content: space-between; }
  .notes p { margin: 0; padding-left: 10px; font-size: 15px; line-height: 31px; color: #5d5a5d; }
  .mini { width: 16px; padding-top: 3px; }
  .mini button { width: 16px; height: 14px; }

  .status { flex: none; height: 22px; display: flex; align-items: center; padding-left: 5px; background: #d1cfd2; border-top: 1px solid #b9b6b9; white-space: nowrap; }
  .spell { margin: 0 12px 0 16px; color: #8b888b; }
  .right-side { margin-left: auto; display: flex; align-items: center; height: 100%; }
  .txt { gap: 2px; }
  .com { margin: 0 15px 0 14px; }
  .com, .txt { color: #4d4a4d; }
  .view { width: 30px; height: 100%; color: #858285; }
  .cur { background: #b1aeb1; }
  .pm { width: 15px; }
  input[type='range'] { appearance: none; width: 100px; height: 12px; margin: 0; background: linear-gradient(#8b888b, #8b888b) 50% 50% / 100% 1px no-repeat, linear-gradient(#8b888b, #8b888b) 50% 50% / 1px 6px no-repeat; }
  input[type='range']::-webkit-slider-thumb { appearance: none; width: 6px; height: 12px; background: #6d6a6d; border-radius: 0; }
  .pct { margin: 0 12px 0 4px; }
  .fit { margin-right: 4px; color: #7d7a7d; }

  .taskbar { flex: none; height: 40px; display: flex; background: linear-gradient(90deg, #3b4048, #3d3f41 30%, #3b3a39 45%, #414245 70%, #494a50); color: #d3d1d4; }
  .taskbar > button { width: 49px; height: 40px; }
  .taskbar > .fx { width: 53px; }
  .taskbar > .running { position: relative; background: #5c5e64; border-bottom: 2px solid #6ba3d6; }
  .p { position: absolute; left: 16px; top: 10px; font-weight: bold; font-size: 12px; color: #e3d6d7; }
  .tray { margin-left: auto; display: flex; align-items: center; gap: 9px; }
  .clock { width: 66px; display: flex; flex-direction: column; text-align: center; font-size: 13px; line-height: 18px; margin: 0 9px 0 1px; }
  .peek { width: 1px; height: 40px; margin: 0 4px 0 11px; background: #77787c; }
</style>
